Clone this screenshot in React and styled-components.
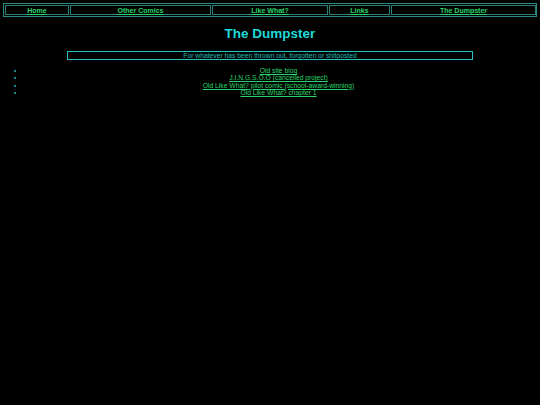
import React from "react";
import styled, { createGlobalStyle } from "styled-components";

const Global = createGlobalStyle`
    html, body {
        margin: 0;
        padding: 0;
        background: #000;
    }
    body {
        font-family: "Liberation Sans", Arial, sans-serif;
        padding: 3px;
        width: 540px;
        height: 405px;
        box-sizing: border-box;
    }
`;

const Nav = styled.nav`
    display: flex;
    gap: 1px;
    padding: 1px;
    border: 1px solid #2e8a80;
    height: 14px;
    box-sizing: border-box;
`;

const NavCell = styled.a`
    flex: 0 0 ${(p) => p.w}px;
    display: flex;
    align-items: center;
    justify-content: center;
    border: 1px solid #2a7f76;
    box-sizing: border-box;
    color: #2bd46a;
    font-size: 7px;
    font-weight: bold;
    text-decoration: underline;
    cursor: pointer;
`;

const Title = styled.h1`
    margin: 9px 0 0 0;
    text-align: center;
    color: #1fdada;
    font-size: 13.5px;
    line-height: 16px;
    font-weight: bold;
`;

const Tagline = styled.div`
    margin: 9px auto 0 auto;
    width: 406px;
    height: 9px;
    box-sizing: border-box;
    border: 1px solid #25c2c2;
    color: #22bcb4;
    font-size: 6.75px;
    line-height: 7px;
    text-align: center;
`;

const List = styled.ul`
    margin: 7px 0 0 0;
    padding: 0 0 0 22px;
    list-style: disc;
    color: #22b8b8;
    font-size: 6.75px;
    line-height: 7.4px;
`;

const Item = styled.li`
    text-align: center;
    padding-right: 5px;
`;

const Link = styled.a`
    color: #2bd46a;
    text-decoration: underline;
    cursor: pointer;
`;

const navItems = [
    { label: "Home", w: 64 },
    { label: "Other Comics", w: 141 },
    { label: "Like What?", w: 116 },
    { label: "Links", w: 61 },
    { label: "The Dumpster", w: 145 },
];

const dumpItems = [
    "Old site blog",
    "J.I.N.G.S.O.O (cancelled project)",
    "Old Like What? pilot comic (school-award-winning)",
    "Old Like What? chapter 1",
];

export default function App() {
    return (
        <>
            <Global />
            <Nav>
                {navItems.map((n) => (
                    <NavCell key={n.label} w={n.w}>
                        {n.label}
                    </NavCell>
                ))}
            </Nav>
            <Title>The Dumpster</Title>
            <Tagline>For whatever has been thrown out, forgotten or shitposted</Tagline>
            <List>
                {dumpItems.map((d) => (
                    <Item key={d}>
                        <Link>{d}</Link>
                    </Item>
                ))}
            </List>
        </>
    );
}
